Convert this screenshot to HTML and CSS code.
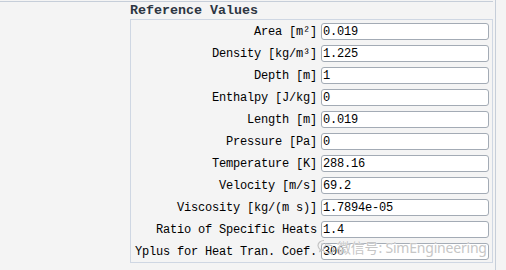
FILE: index.html
```html
<!DOCTYPE html>
<html lang="en">
<head>
    <meta charset="UTF-8">
    <title>Reference Values</title>
    <link rel="stylesheet" href="styles.css">
</head>
<body>
    <div class="page">
        <div class="main">
            <div class="group">
                <div class="group-title">Reference Values</div>
                <div class="group-box">
                    <label>Area [m²]</label><div class="field">0.019</div>
                    <label>Density [kg/m³]</label><div class="field">1.225</div>
                    <label>Depth [m]</label><div class="field">1</div>
                    <label>Enthalpy [J/kg]</label><div class="field">0</div>
                    <label>Length [m]</label><div class="field">0.019</div>
                    <label>Pressure [Pa]</label><div class="field">0</div>
                    <label>Temperature [K]</label><div class="field">288.16</div>
                    <label>Velocity [m/s]</label><div class="field">69.2</div>
                    <label>Viscosity [kg/(m s)]</label><div class="field">1.7894e-05</div>
                    <label>Ratio of Specific Heats</label><div class="field">1.4</div>
                    <label>Yplus for Heat Tran. Coef.</label><div class="field">300</div>
                </div>
            </div>
        </div>
        <div class="edge"></div>
    </div>

    <!-- watermark over the last field -->
    <div class="watermark">
        <svg class="wm-icon" width="18" height="16" viewBox="0 0 18 16">
            <path d="M7 1.5c-3.3 0-6 2.2-6 5 0 1.6.9 3 2.3 3.9L2.8 12.3l2.3-1.2c.6.2 1.2.3 1.9.3" fill="none" stroke="#c4c4c4" stroke-width="1.2"/>
            <path d="M11.5 6c-2.9 0-5.2 1.9-5.2 4.2s2.3 4.2 5.2 4.2c.6 0 1.2-.1 1.7-.3l1.9 1-.4-1.6c1.300-.8 2.1-2 2.1-3.3 0-2.3-2.4-4.2-5.3-4.2z" fill="none" stroke="#c4c4c4" stroke-width="1.2"/>
            <circle cx="4.8" cy="5" r=".8" fill="#c4c4c4"/>
            <circle cx="8.6" cy="5" r=".8" fill="#c4c4c4"/>
        </svg>
        <span>微信号: SimEngineering</span>
    </div>
</body>
</html>
```

FILE: styles.css
```css
body {
    margin: 0;
    width: 506px;
    height: 270px;
    overflow: hidden;
    background-color: #f4f4f4;
    font-family: 'Liberation Mono', 'DejaVu Sans Mono', monospace;
    color: #111;
}
.page {
    display: flex;
    height: 270px;
}
.main {
    width: 493px;
    margin-top: 1px;
    border-top: 1px solid #c6ced9;
    box-sizing: border-box;
    padding-left: 130px;
}
.edge {
    margin-left: 2px;
    border-left: 1px solid #c6ced9;
}
.group {
    width: 363px;
}
.group-title {
    font-weight: bold;
    font-size: 13.33px;
    line-height: 17px;
    color: #2d3642;
    height: 17px;
}
.group-box {
    border: 1px solid #cfd7e3;
    display: grid;
    grid-template-columns: 1fr 168px;
    column-gap: 4px;
    row-gap: 5px;
    padding: 3px 3px 2px 4px;
    align-items: center;
}
label {
    text-align: right;
    font-size: 12px;
    letter-spacing: -0.2px;
    white-space: nowrap;
    color: #000;
}
.field {
    height: 17px;
    box-sizing: border-box;
    background-color: #fff;
    border: 1px solid #a3abb5;
    border-radius: 3px;
    padding-left: 1px;
    font-size: 12px;
    letter-spacing: -0.2px;
    line-height: 16px;
    color: #000;
}
.watermark {
    position: absolute;
    left: 317px;
    top: 237px;
    display: flex;
    align-items: center;
    gap: 2px;
    font-family: 'Noto Sans', 'Noto Sans CJK SC', sans-serif;
    font-size: 14px;
    letter-spacing: -0.2px;
    color: #c6c6c6;
    text-shadow: 0 0 1px #fff, 0 0 2px #fff;
}
```
